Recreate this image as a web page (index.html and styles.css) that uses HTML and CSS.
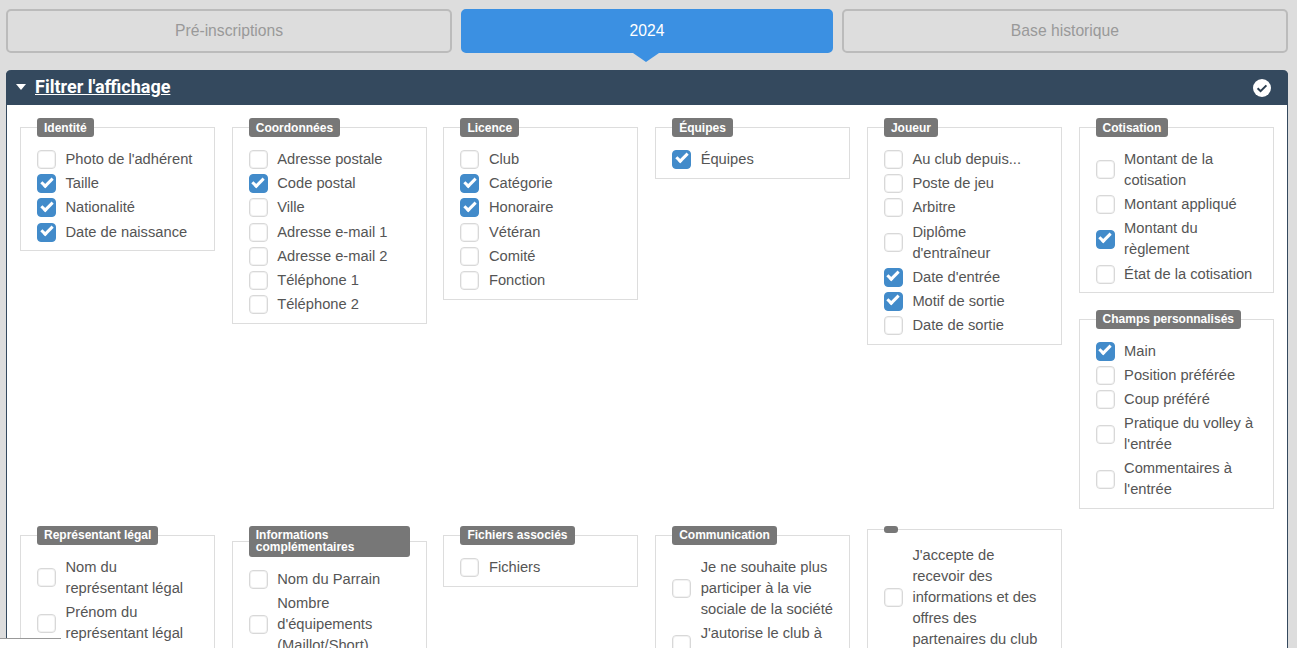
FILE: index.html
```html
<!DOCTYPE html>
<html lang="fr">
<head>
  <meta charset="UTF-8" />
  <title>Filtrer l'affichage</title>
  <link rel="stylesheet" href="styles.css">
</head>
<body>

  <nav class="tabs">
    <a class="tab">Pré-inscriptions</a>
    <a class="tab active">2024</a>
    <a class="tab">Base historique</a>
  </nav>

  <section class="panel">
    <header class="panel-head">
      <span class="caret"></span>
      <h2>Filtrer l'affichage</h2>
      <svg class="all-check" width="20" height="20" viewBox="0 0 20 20">
        <circle cx="10" cy="10" r="9" fill="#fff"/>
        <path d="M5.6 10.2l3 3 5.8-5.8" fill="none" stroke="#2c3e50" stroke-width="2"/>
      </svg>
    </header>

    <div class="filters">
      <fieldset>
        <legend>Identité</legend>
        <label><input type="checkbox"><span>Photo de l'adhérent</span></label>
        <label><input type="checkbox" checked><span>Taille</span></label>
        <label><input type="checkbox" checked><span>Nationalité</span></label>
        <label><input type="checkbox" checked><span>Date de naissance</span></label>
      </fieldset>

      <fieldset>
        <legend>Coordonnées</legend>
        <label><input type="checkbox"><span>Adresse postale</span></label>
        <label><input type="checkbox" checked><span>Code postal</span></label>
        <label><input type="checkbox"><span>Ville</span></label>
        <label><input type="checkbox"><span>Adresse e-mail 1</span></label>
        <label><input type="checkbox"><span>Adresse e-mail 2</span></label>
        <label><input type="checkbox"><span>Téléphone 1</span></label>
        <label><input type="checkbox"><span>Téléphone 2</span></label>
      </fieldset>

      <fieldset>
        <legend>Licence</legend>
        <label><input type="checkbox"><span>Club</span></label>
        <label><input type="checkbox" checked><span>Catégorie</span></label>
        <label><input type="checkbox" checked><span>Honoraire</span></label>
        <label><input type="checkbox"><span>Vétéran</span></label>
        <label><input type="checkbox"><span>Comité</span></label>
        <label><input type="checkbox"><span>Fonction</span></label>
      </fieldset>

      <fieldset>
        <legend>Équipes</legend>
        <label><input type="checkbox" checked><span>Équipes</span></label>
      </fieldset>

      <fieldset>
        <legend>Joueur</legend>
        <label><input type="checkbox"><span>Au club depuis...</span></label>
        <label><input type="checkbox"><span>Poste de jeu</span></label>
        <label><input type="checkbox"><span>Arbitre</span></label>
        <label><input type="checkbox"><span>Diplôme d'entraîneur</span></label>
        <label><input type="checkbox" checked><span>Date d'entrée</span></label>
        <label><input type="checkbox" checked><span>Motif de sortie</span></label>
        <label><input type="checkbox"><span>Date de sortie</span></label>
      </fieldset>

      <div class="stack">
        <fieldset>
          <legend>Cotisation</legend>
          <label><input type="checkbox"><span>Montant de la cotisation</span></label>
          <label><input type="checkbox"><span>Montant appliqué</span></label>
          <label><input type="checkbox" checked><span>Montant du règlement</span></label>
          <label><input type="checkbox"><span>État de la cotisation</span></label>
        </fieldset>
        <fieldset>
          <legend>Champs personnalisés</legend>
          <label><input type="checkbox" checked><span>Main</span></label>
          <label><input type="checkbox"><span>Position préférée</span></label>
          <label><input type="checkbox"><span>Coup préféré</span></label>
          <label><input type="checkbox"><span>Pratique du volley à l'entrée</span></label>
          <label><input type="checkbox"><span>Commentaires à l'entrée</span></label>
        </fieldset>
      </div>

      <fieldset>
        <legend>Représentant légal</legend>
        <label><input type="checkbox"><span>Nom du représentant légal</span></label>
        <label><input type="checkbox"><span>Prénom du représentant légal</span></label>
      </fieldset>

      <fieldset>
        <legend>Informations complémentaires</legend>
        <label><input type="checkbox"><span>Nom du Parrain</span></label>
        <label><input type="checkbox"><span>Nombre d'équipements (Maillot/Short)</span></label>
      </fieldset>

      <fieldset>
        <legend>Fichiers associés</legend>
        <label><input type="checkbox"><span>Fichiers</span></label>
      </fieldset>

      <fieldset>
        <legend>Communication</legend>
        <label><input type="checkbox"><span>Je ne souhaite plus participer à la vie sociale de la société</span></label>
        <label><input type="checkbox"><span>J'autorise le club à utiliser mon image</span></label>
      </fieldset>

      <fieldset>
        <legend></legend>
        <label><input type="checkbox"><span>J'accepte de recevoir des informations et des offres des partenaires du club</span></label>
      </fieldset>
    </div>
  </section>

  <div class="corner"></div>

</body>
</html>
```

FILE: styles.css
```css
html, body {
  height: 648px;
  overflow: hidden;
}
body {
  margin: 0;
  padding: 9px 9px 0 6px;
  box-sizing: border-box;
  background: #ddd;
  font-family: 'Liberation Sans', Arial, sans-serif;
  font-size: 14.7px;
  color: #555;
}
.tabs {
  display: grid;
  grid-template-columns: 1.2fr 1fr 1.2fr;
  gap: 9px;
}
.tab {
  position: relative;
  height: 44px;
  box-sizing: border-box;
  border: 2px solid #bbb;
  border-radius: 5px;
  color: #999;
  font-size: 15.7px;
  line-height: 40px;
  text-align: center;
}
.tab.active {
  background: #3b90e2;
  border-color: #3b90e2;
  color: #fff;
}
.tab.active::after {
  content: "";
  position: absolute;
  left: 50%;
  top: 42px;
  margin-left: -14px;
  border-style: solid;
  border-width: 9px 13px 0;
  border-color: #3b90e2 transparent transparent;
}
.panel {
  margin-top: 17px;
  border: 1px solid #34495e;
  border-top: none;
  border-radius: 5px 5px 0 0;
  background: #fff;
}
.panel-head {
  display: flex;
  align-items: center;
  height: 35px;
  margin: 0 -1px;
  padding: 0 16px 2px 10px;
  box-sizing: border-box;
  background: #34495e;
  border-radius: 5px 5px 0 0;
  color: #fff;
}
.panel-head h2 {
  flex: 1;
  margin: 0;
  font-family: Roboto, sans-serif;
  font-size: 18px;
  font-weight: 700;
  text-decoration: underline;
}
.caret {
  margin-right: 9px;
  border-style: solid;
  border-width: 6px 5.5px 0;
  border-color: #fff transparent transparent;
}
.all-check {
  margin-top: 2px;
}
.filters {
  display: grid;
  grid-template-columns: repeat(6, 195px);
  justify-content: space-between;
  align-items: start;
  row-gap: 16.9px;
  padding: 13px 13.4px 0 13px;
}
.stack {
  display: flex;
  flex-direction: column;
  gap: 16.6px;
}
fieldset {
  min-width: 0;
  margin: 0;
  padding: 10.35px 16px 6.05px;
  border: 1px solid #ddd;
}
legend {
  padding: 3.5px 7px;
  background: #777;
  border-radius: 3px;
  color: #fff;
  font-size: 12px;
  font-weight: 700;
  line-height: 12px;
}
label {
  display: flex;
  align-items: center;
  gap: 9.5px;
  padding: 1.6px 0;
  line-height: 21px;
}
input {
  appearance: none;
  position: relative;
  flex: none;
  width: 19px;
  height: 19px;
  box-sizing: border-box;
  margin: 0;
  background: #fff;
  border: 1px solid #d8d8d8;
  border-radius: 4px;
  box-shadow: inset 0 0 0 1px #f2f2f2;
}
input:checked {
  background: #428bca;
  border-color: #428bca;
  box-shadow: none;
}
input:checked::after {
  content: "";
  position: absolute;
  left: 2.5px;
  top: 2.5px;
  width: 12px;
  height: 7px;
  border-left: 3px solid #fff;
  border-bottom: 3px solid #fff;
  transform: rotate(-45deg);
  box-sizing: border-box;
}
.corner {
  position: fixed;
  left: 0;
  top: 638px;
  width: 61px;
  height: 10px;
  background: #fff;
  border-top: 1px solid #999;
}
```
